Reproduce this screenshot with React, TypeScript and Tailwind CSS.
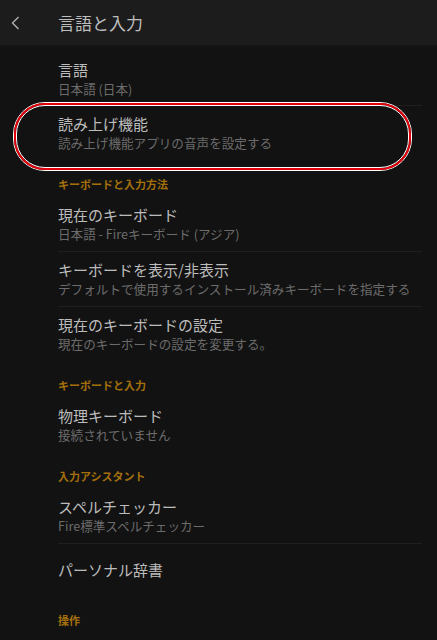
import React from "react";

const font = { fontFamily: '"Noto Sans CJK JP", "Noto Sans", sans-serif' };

function Row({ title, sub, divider = true, first = false }: { title: string; sub?: string; divider?: boolean; first?: boolean }) {
  return (
    <div className={`${first ? "pt-[14px] pb-[7px]" : "pt-2 pb-2"} ml-[58px] mr-[15px] ${divider ? "border-b border-[#1f1f1f]" : ""}`}>
      <div className="text-[15px] leading-[20px] text-[#bcbcbc]">{title}</div>
      {sub && <div className="text-[12.6px] leading-[18px] text-[#6c6c6c] whitespace-nowrap">{sub}</div>}
    </div>
  );
}

function Section({ label }: { label: string }) {
  return (
    <div className="pt-[16px] pb-[5px] pl-[58px] text-[11px] leading-[16px] font-bold text-[#a4700c]">{label}</div>
  );
}

export default function App() {
  return (
    <div className="w-[437px] h-[640px] bg-[#121212] overflow-hidden" style={font}>
      <div className="h-[46px] bg-[#1c1c1c] flex items-center border-b border-[#141414]">
        <svg width="24" height="24" viewBox="0 0 24 24" className="ml-[3px] mt-[1px]">
          <path d="M15.5 6 L9.5 12 L15.5 18" fill="none" stroke="#b0b0b0" strokeWidth="1.4" />
        </svg>
        <div className="ml-[31px] text-[17px] text-[#bdbdbd]">言語と入力</div>
      </div>
      <Row first title="言語" sub="日本語 (日本)" />
      <div className="relative">
        <Row title="読み上げ機能" sub="読み上げ機能アプリの音声を設定する" divider={false} />
        <div className="absolute left-[13px] top-[-4px] w-[399px] h-[69px] rounded-[32px] border border-white">
          <div className="w-full h-full rounded-[31px] border-2 border-[#e3000b]">
            <div className="w-full h-full rounded-[29px] border border-white" />
          </div>
        </div>
      </div>
      <Section label="キーボードと入力方法" />
      <Row title="現在のキーボード" sub="日本語 - Fireキーボード (アジア)" />
      <Row title="キーボードを表示/非表示" sub="デフォルトで使用するインストール済みキーボードを指定する" />
      <Row title="現在のキーボードの設定" sub="現在のキーボードの設定を変更する。" divider={false} />
      <Section label="キーボードと入力" />
      <Row title="物理キーボード" sub="接続されていません" divider={false} />
      <Section label="入力アシスタント" />
      <Row title="スペルチェッカー" sub="Fire標準スペルチェッカー" />
      <div className="ml-[58px] h-[52px] flex items-center text-[15px] leading-[20px] text-[#bcbcbc]">パーソナル辞書</div>
      <Section label="操作" />
    </div>
  );
}
